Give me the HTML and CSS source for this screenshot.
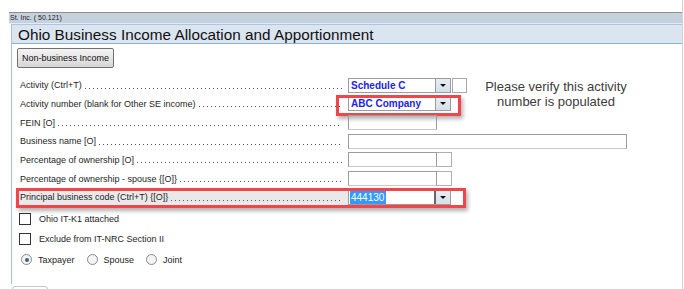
FILE: index.html
```html
<!DOCTYPE html>
<html lang="en">
<head>
  <meta charset="UTF-8" />
  <title>Ohio Business Income Allocation and Apportionment</title>
  <link rel="stylesheet" href="styles.css">
</head>
<body>
  <div class="page">
    <div class="frame">
      <div class="crumb">St. Inc. ( 50.121)</div>
      <div class="panel">
        <div class="title">Ohio Business Income Allocation and Apportionment</div>

        <div class="content">
          <button class="btn">Non-business Income</button>

          <div class="rows">
            <div class="row">
              <div class="lbl"><span>Activity (Ctrl+T)</span><span class="dots"></span></div>
              <div class="combo"><span class="val">Schedule C</span><span class="arrow"></span></div>
              <div class="mini"></div>
            </div>
            <div class="row">
              <div class="lbl"><span>Activity number (blank for Other SE income)</span><span class="dots"></span></div>
              <div class="combo"><span class="val">ABC Company</span><span class="arrow"></span></div>
              <div class="mark mark-abc"></div>
            </div>
            <div class="row">
              <div class="lbl"><span>FEIN [O]</span><span class="dots"></span></div>
              <div class="field"></div>
            </div>
            <div class="row">
              <div class="lbl"><span>Business name [O]</span><span class="dots"></span></div>
              <div class="field wide"></div>
            </div>
            <div class="row">
              <div class="lbl"><span>Percentage of ownership [O]</span><span class="dots"></span></div>
              <div class="field"></div><div class="tail"></div>
            </div>
            <div class="row">
              <div class="lbl"><span>Percentage of ownership - spouse {[O]}</span><span class="dots"></span></div>
              <div class="field"></div><div class="tail"></div>
            </div>
            <div class="row current">
              <div class="lbl"><span>Principal business code (Ctrl+T) {[O]}</span><span class="dots"></span></div>
              <div class="combo code"><span class="sel">444130</span><span class="arrow dark"></span></div>
              <div class="mark mark-code"></div>
            </div>
          </div>

          <div class="checks">
            <label class="check"><span class="box"></span>Ohio IT-K1 attached</label>
            <label class="check"><span class="box"></span>Exclude from IT-NRC Section II</label>
            <div class="radios">
              <span class="radio on"></span><span class="rtxt">Taxpayer</span>
              <span class="radio"></span><span class="rtxt">Spouse</span>
              <span class="radio"></span><span class="rtxt">Joint</span>
            </div>
          </div>

          <p class="note">Please verify this activity<br>number is populated</p>
        </div>
      </div>
      <div class="stub"></div>
    </div>
  </div>
</body>
</html>
```

FILE: styles.css
```css
body {
  margin: 0;
  background: #ffffff;
  font-family: 'Liberation Sans', Arial, sans-serif;
  color: #1e1e1e;
  overflow: hidden;
}
.page {
  width: 683px;
  height: 289px;
  border-right: 1px solid #d4d4d4;
  padding-top: 12px;
  box-sizing: border-box;
}
.frame {
  margin-left: 9px;
  border-top: 1px solid #8e8e8e;
}
.crumb {
  height: 10px;
  background: #c6d1de;
  border-bottom: 1px solid #e3eaf2;
  font-size: 7px;
  line-height: 10px;
  padding-left: 1px;
  color: #222;
}
.panel {
  margin-left: 2px;
  height: 260px;
  border-left: 1px solid #a6c2e3;
}
.title {
  height: 18px;
  background: #dbe5f0;
  border-top: 1px solid #a9c7e9;
  border-bottom: 1px solid #86b0de;
  padding-left: 6px;
  font-size: 15.3px;
  line-height: 19px;
  color: #111;
}
.content {
  position: relative;
  padding: 4px 0 0 5px;
}
.btn {
  display: block;
  width: 97px;
  height: 20px;
  padding: 0;
  border: 1px solid #707070;
  border-radius: 2px;
  background: linear-gradient(#f4f4f4, #e6e6e6 50%, #d6d6d6);
  font-family: 'Liberation Sans', Arial, sans-serif;
  font-size: 9px;
  color: #111;
}

/* form rows */
.rows {
  margin-top: 8px;
  margin-left: 1px;
  display: grid;
  grid-auto-rows: 18.67px;
}
.row {
  position: relative;
  display: flex;
  align-items: center;
  font-size: 9px;
}
.lbl {
  width: 330px;
  padding-left: 2px;
  box-sizing: border-box;
  display: flex;
  align-items: center;
  white-space: nowrap;
  height: 100%;
}
.current .lbl {
  background: #e9e9e9;
}
.dots {
  flex: 1;
  height: 7px;
  margin: 0 6px 0 3px;
  background-image: linear-gradient(to right, #555 1px, transparent 1px);
  background-size: 4px 1px;
  background-repeat: repeat-x;
  background-position: left bottom;
}
.combo {
  width: 103px;
  height: 15px;
  box-sizing: border-box;
  border: 1px solid #9c9c9c;
  background: #fff;
  display: flex;
  align-items: center;
}
.val {
  flex: 1;
  padding-left: 2px;
  font-size: 10px;
  font-weight: bold;
  color: #2323e6;
}
.arrow {
  width: 14px;
  height: 100%;
  border-left: 1px solid #9c9c9c;
  background: linear-gradient(#e6edf4, #d6e0ea);
  position: relative;
}
.arrow::after {
  content: "";
  position: absolute;
  left: 4px;
  top: 5px;
  border-left: 3px solid transparent;
  border-right: 3px solid transparent;
  border-top: 3px solid #111;
}
.arrow.dark {
  border-left: 2px solid #666;
}
.sel {
  margin-left: 1px;
  padding: 1px 2px 1px 1px;
  background: #3399ff;
  color: #fff;
  font-size: 10px;
  line-height: 11px;
}
.code .sel + .arrow {
  margin-left: auto;
}
.mini {
  width: 15px;
  height: 15px;
  box-sizing: border-box;
  border: 1px solid #a8a8a8;
  margin-left: 1px;
}
.field {
  width: 89px;
  height: 15px;
  box-sizing: border-box;
  border: 1px solid #9c9c9c;
  border-bottom-color: #c8c8c8;
}
.field.wide {
  width: 279px;
}
.tail {
  width: 15px;
  height: 15px;
  box-sizing: border-box;
  border: 1px solid #b0b0b0;
  border-left: none;
}

/* highlight boxes */
.mark {
  position: absolute;
  border: 3px solid #f0454a;
  box-shadow: 2px 3px 4px rgba(0, 0, 0, 0.3);
  box-sizing: border-box;
}
.mark-abc {
  left: 318px;
  top: 0;
  width: 125px;
  height: 21px;
}
.mark-code {
  left: -2px;
  top: 0;
  width: 450px;
  height: 20px;
}

/* checks and radios */
.checks {
  margin-top: 2px;
  margin-left: 2px;
  font-size: 9px;
}
.check, .radios {
  height: 20.5px;
  display: flex;
  align-items: center;
}
.box {
  width: 12px;
  height: 12px;
  box-sizing: border-box;
  border: 1px solid #333;
  background: #fff;
  margin-right: 8px;
}
.radio {
  width: 11px;
  height: 11px;
  box-sizing: border-box;
  border: 1px solid #8a8a8a;
  border-radius: 50%;
  background: #f4f4f4;
  margin-left: 2px;
  margin-right: 6px;
  position: relative;
}
.radio.on::after {
  content: "";
  position: absolute;
  left: 2.5px;
  top: 2.5px;
  width: 4px;
  height: 4px;
  border-radius: 50%;
  background: #3d5f8c;
}
.rtxt {
  margin-right: 10px;
}

.note {
  position: absolute;
  left: 464px;
  top: 35px;
  width: 160px;
  margin: 0;
  text-align: center;
  font-size: 13px;
  line-height: 15px;
  color: #3c3c3c;
}
.stub {
  margin-left: 3px;
  margin-top: 2px;
  width: 34px;
  height: 10px;
  border: 1px solid #c4c4c4;
  border-radius: 3px 3px 0 0;
}
```
